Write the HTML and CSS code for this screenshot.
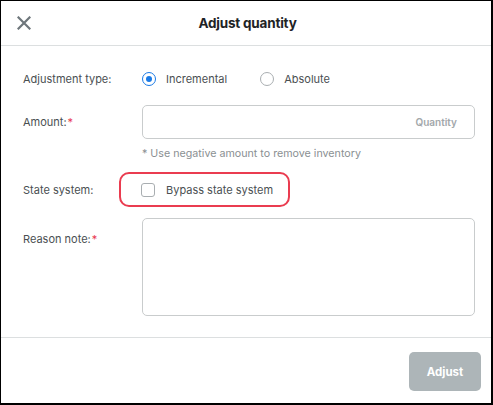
FILE: index.html
```html
<!DOCTYPE html>
<html>
<head>
<meta charset="utf-8">
<link rel="stylesheet" href="styles.css">
</head>
<body>
<div class="dialog">
  <div class="header">
    <span class="close">
      <svg width="14" height="14" viewBox="0 0 14 14"><path d="M1.5 1.5 L12.5 12.5 M12.5 1.5 L1.5 12.5" stroke="#6e767b" stroke-width="2.2" stroke-linecap="square" fill="none"/></svg>
    </span>
    <h1 class="title">Adjust quantity</h1>
  </div>
  <div class="body">
    <div class="row row-type">
      <div class="label">Adjustment type:</div>
      <div class="control radios">
        <label class="radio"><span class="radio-dot checked"></span>Incremental</label>
        <label class="radio"><span class="radio-dot"></span>Absolute</label>
      </div>
    </div>
    <div class="row row-amount">
      <div class="label">Amount:<span class="req">*</span></div>
      <div class="control">
        <div class="input"><span class="placeholder">Quantity</span></div>
      </div>
    </div>
    <div class="hint">* Use negative amount to remove inventory</div>
    <div class="row row-state">
      <div class="label">State system:</div>
      <div class="control state">
        <span class="highlight"></span>
        <label class="check"><span class="checkbox"></span>Bypass state system</label>
      </div>
    </div>
    <div class="row row-reason">
      <div class="label label-top">Reason note:<span class="req">*</span></div>
      <div class="control">
        <div class="textarea"></div>
      </div>
    </div>
  </div>
  <div class="footer">
    <button class="btn">Adjust</button>
  </div>
</div>
</body>
</html>
```

FILE: styles.css
```css
* { box-sizing: border-box; }
html, body { margin: 0; padding: 0; background: #fff; }
body { font-family: "Inter", "Liberation Sans", sans-serif; color: #4a4f52; }

.dialog {
  width: 493px;
  height: 405px;
  border-style: solid;
  border-color: #000;
  border-width: 1px 2px 2px 1px;
  display: flex;
  flex-direction: column;
  background: #fff;
}

.header {
  height: 45px;
  border-bottom: 1px solid #dcdfe0;
  display: flex;
  align-items: center;
  position: relative;
  padding-left: 16px;
}
.close { width: 14px; height: 14px; display: flex; margin-top: -1px; }
.title {
  position: absolute;
  left: 0; right: 0;
  top: 0; bottom: 0;
  margin: 0;
  display: flex;
  align-items: center;
  justify-content: center;
  font-size: 13.5px;
  font-weight: 700;
  color: #1e2325;
  pointer-events: none;
  letter-spacing: -0.2px;
  padding-left: 3px;
}

.body {
  flex: 1;
  padding: 23px 16px 0 22px;
  border-bottom: 1px solid #dcdfe0;
}

.row { display: flex; align-items: center; }
.label {
  width: 119px;
  flex: none;
  font-size: 11px;
  color: #4a4f52;
}
.req { color: #e8384f; margin-left: 1px; }
.control { flex: 1; display: flex; align-items: center; }

.row-type { height: 20px; }
.radio {
  display: flex;
  align-items: center;
  font-size: 11px;
  color: #4a4f52;
  margin-right: 33px;
}
.radio-dot {
  width: 14px; height: 14px;
  border-radius: 50%;
  border: 1px solid #a9aeb1;
  margin-right: 10px;
  position: relative;
  background: #fff;
}
.radio-dot.checked { border: 1.5px solid #1a7ae6; }
.radio-dot.checked::after {
  content: "";
  position: absolute;
  left: 2.5px; top: 2.5px;
  width: 6px; height: 6px;
  border-radius: 50%;
  background: #1a7ae6;
}

.row-amount { margin-top: 16px; }
.input {
  width: 100%;
  height: 34px;
  border: 1px solid #c9cccd;
  border-radius: 5px;
  display: flex;
  align-items: center;
  justify-content: flex-end;
  padding-right: 17px;
}
.placeholder { font-size: 10px; font-weight: 600; color: #a3a8ab; }

.hint {
  margin: 8px 0 0 119px;
  font-size: 10.7px;
  color: #8a8f92;
  line-height: 14px;
}

.row-state { margin-top: 11px; height: 35px; }
.state { position: relative; height: 35px; }
.highlight {
  position: absolute;
  left: -23px;
  top: 0;
  width: 171px;
  height: 35px;
  border: 2px solid #ea3c50;
  border-radius: 10px;
}
.check {
  display: flex;
  align-items: center;
  font-size: 11px;
  color: #4a4f52;
  margin-left: -1px;
}
.checkbox {
  width: 14px; height: 14px;
  border: 1px solid #a9aeb1;
  border-radius: 3px;
  margin-right: 11px;
  background: #fff;
}

.row-reason { margin-top: 11px; align-items: flex-start; }
.label-top { padding-top: 14px; }
.textarea {
  width: 100%;
  height: 98px;
  border: 1px solid #c9cccd;
  border-radius: 5px;
}

.footer {
  height: 65px;
  flex: none;
  display: flex;
  align-items: flex-start;
  justify-content: flex-end;
  padding: 14px 10px 0 0;
}
.btn {
  width: 72px;
  height: 39px;
  border: none;
  border-radius: 5px;
  background: #adb5b8;
  color: #fff;
  font-family: "Inter", "Liberation Sans", sans-serif;
  font-size: 11.5px;
  font-weight: 700;
}
```
